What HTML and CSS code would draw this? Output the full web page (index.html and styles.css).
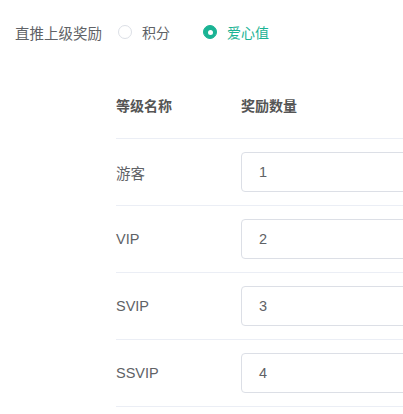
FILE: index.html
```html
<!DOCTYPE html>
<html lang="zh">
<head>
<meta charset="utf-8">
<link rel="stylesheet" href="styles.css">
</head>
<body>
<div class="page">
  <div class="form-item">
    <span class="form-label">直推上级奖励</span>
    <label class="radio"><span class="radio-dot"></span><span class="radio-text">积分</span></label>
    <label class="radio checked"><span class="radio-dot"></span><span class="radio-text">爱心值</span></label>
  </div>
  <table class="grade-table">
    <thead>
      <tr><th class="col-name">等级名称</th><th>奖励数量</th></tr>
    </thead>
    <tbody>
      <tr><td class="col-name">游客</td><td><div class="input">1</div></td></tr>
      <tr><td class="col-name">VIP</td><td><div class="input">2</div></td></tr>
      <tr><td class="col-name">SVIP</td><td><div class="input">3</div></td></tr>
      <tr><td class="col-name">SSVIP</td><td><div class="input">4</div></td></tr>
    </tbody>
  </table>
</div>
</body>
</html>
```

FILE: styles.css
```css
html, body {
  margin: 0;
  padding: 0;
  background: #fff;
}
body {
  font-family: "Liberation Sans", "Noto Sans CJK SC", sans-serif;
  color: #606266;
  font-size: 14px;
  overflow: hidden;
}
.page {
  width: 403px;
  height: 414px;
  overflow: hidden;
}
.form-item {
  display: flex;
  align-items: center;
  height: 40px;
  margin-top: 12px;
  padding-left: 15px;
}
.form-label {
  width: 103px;
  font-size: 14.5px;
  color: #606266;
  white-space: nowrap;
}
.radio {
  display: flex;
  align-items: center;
  margin-right: 33px;
  font-size: 14px;
  color: #606266;
}
.radio-dot {
  width: 12px;
  height: 12px;
  border: 1px solid #dcdfe6;
  border-radius: 50%;
  box-sizing: content-box;
  margin-right: 10px;
  position: relative;
}
.radio.checked .radio-dot {
  background: #1ab394;
  border-color: #1ab394;
}
.radio.checked .radio-dot::after {
  content: "";
  position: absolute;
  left: 50%;
  top: 50%;
  width: 5px;
  height: 5px;
  margin: -2.5px 0 0 -2.5px;
  background: #fff;
  border-radius: 50%;
}
.radio.checked .radio-text {
  color: #1ab394;
}
.grade-table {
  margin-left: 116px;
  margin-top: 20px;
  border-collapse: collapse;
  width: 400px;
}
.grade-table th,
.grade-table td {
  padding: 0;
  text-align: left;
  border-bottom: 1px solid #ebeef5;
  height: 66px;
  vertical-align: middle;
}
.grade-table th {
  font-weight: bold;
  color: #555;
  font-size: 14px;
}
.grade-table .col-name {
  width: 125px;
}
.grade-table td {
  font-size: 14.5px;
  color: #606266;
}
.input {
  height: 38px;
  line-height: 38px;
  border: 1px solid #dcdfe6;
  border-radius: 4px;
  padding-left: 17px;
  color: #606266;
  font-size: 14.5px;
}
```
